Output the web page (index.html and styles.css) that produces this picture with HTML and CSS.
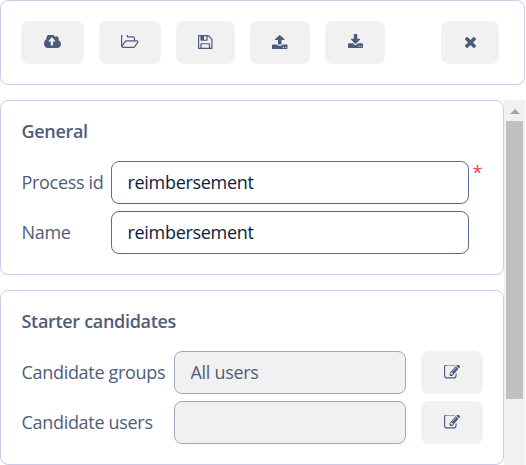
FILE: index.html
```html
<!DOCTYPE html>
<html lang="en">
<head>
<meta charset="utf-8">
<title>Process properties</title>
<link rel="stylesheet" href="styles.css">
</head>
<body>
<header class="card toolbar">
  <button class="btn btn-cloud" aria-label="Deploy"><svg class="i-cloud" preserveAspectRatio="none" viewBox="0 256 1920 1280"><path d="M1280 864q0-14-9-23l-352-352q-9-9-23-9t-23 9l-351 351q-10 12-10 24 0 14 9 23t23 9h224v352q0 13 9.5 22.5t22.5 9.5h192q13 0 22.5-9.5t9.5-22.5v-352h224q13 0 22.5-9.5t9.5-22.5zm640 288q0 159-112.5 271.5t-271.5 112.5h-1088q-185 0-316.5-131.5t-131.5-316.5q0-130 70-240t188-165q-2-30-2-43 0-212 150-362t362-150q156 0 285.5 87t188.5 231q71-62 166-62 106 0 181 75t75 181q0 76-41 138 130 31 213.5 135.5t83.5 238.5z"/></svg></button>
  <button class="btn btn-folder" aria-label="Open"><svg class="i-folder" preserveAspectRatio="none" viewBox="64 256 1909 1280"><path d="M1845 931q0-35-53-35h-1088q-40 0-85.5 21.5t-71.5 52.5l-294 363q-18 24-18 40 0 35 53 35h1088q40 0 86-22t71-53l294-363q18-22 18-39zm-1141-163h768v-160q0-40-28-68t-68-28h-576q-40 0-68-28t-28-68v-64q0-40-28-68t-68-28h-320q-40 0-68 28t-28 68v853l256-315q44-53 116-87.5t140-34.5zm1269 163q0 62-46 120l-295 363q-43 53-116 87.5t-140 34.5h-1088q-92 0-158-66t-66-158v-960q0-92 66-158t158-66h320q92 0 158 66t66 158v32h544q92 0 158 66t66 158v160h192q54 0 99 24.5t67 70.5q15 32 15 68z"/></svg></button>
  <button class="btn btn-save" aria-label="Save"><svg class="i-save" preserveAspectRatio="none" viewBox="128 128 1536 1536"><path d="M512 1536h768v-384h-768v384zm896 0h128v-896q0-14-10-38.5t-20-34.5l-281-281q-10-10-34-20t-39-10v416q0 40-28 68t-68 28h-576q-40 0-68-28t-28-68v-416h-128v1280h128v-416q0-40 28-68t68-28h832q40 0 68 28t28 68v416zm-384-928v-320q0-13-9.5-22.5t-22.5-9.5h-192q-13 0-22.5 9.5t-9.5 22.5v320q0 13 9.5 22.5t22.5 9.5h192q13 0 22.5-9.5t9.5-22.5zm640 32v928q0 40-28 68t-68 28h-1344q-40 0-68-28t-28-68v-1344q0-40 28-68t68-28h928q40 0 88 20t76 48l280 280q28 28 48 76t20 88z"/></svg></button>
  <button class="btn btn-load" aria-label="Upload"><svg class="i-upload" preserveAspectRatio="none" viewBox="64 64 1664 1600"><path d="M1344 1472q0-26-19-45t-45-19-45 19-19 45 19 45 45 19 45-19 19-45zm256 0q0-26-19-45t-45-19-45 19-19 45 19 45 45 19 45-19 19-45zm128-224v320q0 40-28 68t-68 28h-1472q-40 0-68-28t-28-68v-320q0-40 28-68t68-28h427q21 56 70.5 92t110.5 36h256q61 0 110.5-36t70.5-92h427q40 0 68 28t28 68zm-325-648q-17 40-59 40h-256v448q0 26-19 45t-45 19h-256q-26 0-45-19t-19-45v-448h-256q-42 0-59-40-17-39 14-69l448-448q18-19 45-19t45 19l448 448q31 30 14 69z"/></svg></button>
  <button class="btn btn-load" aria-label="Download"><svg class="i-download" preserveAspectRatio="none" viewBox="64 0 1664 1536"><path d="M1344 1344q0-26-19-45t-45-19-45 19-19 45 19 45 45 19 45-19 19-45zm256 0q0-26-19-45t-45-19-45 19-19 45 19 45 45 19 45-19 19-45zm128-224v320q0 40-28 68t-68 28h-1472q-40 0-68-28t-28-68v-320q0-40 28-68t68-28h465l135 136q58 56 136 56t136-56l136-136h464q40 0 68 28t28 68zm-325-569q17 41-14 70l-448 448q-18 19-45 19t-45-19l-448-448q-31-29-14-70 17-39 59-39h256v-448q0-26 19-45t45-19h256q26 0 45 19t19 45v448h256q42 0 59 39z"/></svg></button>
  <button class="btn btn-close" aria-label="Close"><svg class="i-close" preserveAspectRatio="none" viewBox="302 366 1188 1188"><path d="M1490 1322q0 40-28 68l-136 136q-28 28-68 28t-68-28l-294-294-294 294q-28 28-68 28t-68-28l-136-136q-28-28-28-68t28-68l294-294-294-294q-28-28-28-68t28-68l136-136q28-28 68-28t68 28l294 294 294-294q28-28 68-28t68 28l136 136q28 28 28 68t-28 68l-294 294 294 294q28 28 28 68z"/></svg></button>
</header>
<main class="panel">
  <div class="sections">
    <section class="card section">
      <h2>General</h2>
      <div class="row"><label class="label-general" for="pid">Process id</label><input id="pid" class="field field-general" value="reimbersement"><span class="required">*</span></div>
      <div class="row"><label class="label-general" for="name">Name</label><input id="name" class="field field-general" value="reimbersement"></div>
    </section>
    <section class="card section">
      <h2>Starter candidates</h2>
      <div class="row"><label class="label-starter" for="groups">Candidate groups</label><input id="groups" class="field field-starter" value="All users" disabled><button class="btn btn-edit" aria-label="Edit groups"><svg class="i-edit" preserveAspectRatio="none" viewBox="0 212 1784 1324"><path d="M888 1184l116-116-152-152-116 116v56h96v96h56zm440-720q-16-16-33 1l-350 350q-17 17-1 33t33-1l350-350q17-17 1-33zm80 594v190q0 119-84.5 203.5t-203.5 84.5h-832q-119 0-203.5-84.5t-84.5-203.5v-832q0-119 84.5-203.5t203.5-84.5h832q63 0 117 25 15 7 18 23 3 17-9 29l-49 49q-14 14-32 8-23-6-45-6h-832q-66 0-113 47t-47 113v832q0 66 47 113t113 47h832q66 0 113-47t47-113v-126q0-13 9-22l64-64q15-15 35-7t20 29zm-96-738l288 288-672 672h-288v-288zm444 132l-92 92-288-288 92-92q28-28 68-28t68 28l152 152q28 28 28 68t-28 68z"/></svg></button></div>
      <div class="row"><label class="label-starter" for="users">Candidate users</label><input id="users" class="field field-starter" disabled><button class="btn btn-edit" aria-label="Edit users"><svg class="i-edit" preserveAspectRatio="none" viewBox="0 212 1784 1324"><path d="M888 1184l116-116-152-152-116 116v56h96v96h56zm440-720q-16-16-33 1l-350 350q-17 17-1 33t33-1l350-350q17-17 1-33zm80 594v190q0 119-84.5 203.5t-203.5 84.5h-832q-119 0-203.5-84.5t-84.5-203.5v-832q0-119 84.5-203.5t203.5-84.5h832q63 0 117 25 15 7 18 23 3 17-9 29l-49 49q-14 14-32 8-23-6-45-6h-832q-66 0-113 47t-47 113v832q0 66 47 113t113 47h832q66 0 113-47t47-113v-126q0-13 9-22l64-64q15-15 35-7t20 29zm-96-738l288 288-672 672h-288v-288zm444 132l-92 92-288-288 92-92q28-28 68-28t68 28l152 152q28 28 28 68t-28 68z"/></svg></button></div>
    </section>
  </div>
  <div class="scrollbar"><span class="arrow"></span><span class="thumb"></span></div>
</main>
</body>
</html>
```
FILE: styles.css
```css
* { box-sizing: border-box; }
body {
  margin: 0;
  width: 525px;
  height: 465px;
  overflow: hidden;
  background: #fff;
  color: #4f5d7a;
  font: 18px/25px "Open Sans", sans-serif;
  letter-spacing: -0.31px;
}
.card {
  border: 1px solid #d0c9ea;
  border-radius: 8px;
  background: #fff;
}
.toolbar {
  display: flex;
  gap: 15px;
  height: 85px;
  padding: 20px 25px 20px 20px;
}
.btn {
  display: flex;
  flex: none;
  align-items: flex-start;
  justify-content: flex-start;
  height: 43px;
  padding: 0;
  border: 0;
  border-radius: 8px;
  background: #f1f1f1;
  color: #4c5c7c;
}
.btn svg { display: block; fill: currentColor; }
.btn-cloud { width: 63px; }
.btn-folder { width: 62px; }
.btn-save { width: 59px; }
.btn-load { width: 60px; }
.btn-close { width: 58px; margin-left: auto; }
.btn-edit { width: 62px; margin-left: 15px; }
.i-cloud { width: 17px; height: 13px; margin: 14px 0 0 23px; }
.i-folder { width: 17.5px; height: 13px; margin: 14px 0 0 22px; }
.i-save { width: 14.5px; height: 14px; margin: 14px 0 0 22px; }
.i-upload { width: 15.5px; height: 14px; margin: 14px 0 0 22.3px; }
.i-download { width: 15px; height: 14px; margin: 13px 0 0 23px; }
.i-close { width: 11px; height: 11px; margin: 16px 0 0 24px; }
.i-edit { width: 16px; height: 13.5px; margin: 14px 0 0 23px; }
.panel {
  display: flex;
  height: 365px;
  margin-top: 15px;
}
.sections {
  display: flex;
  flex-direction: column;
  gap: 15px;
  width: 504px;
}
.section { height: 175px; padding: 18px 20px 0 20.5px; }
h2 {
  margin: 0 0 17px;
  font-size: 18px;
  font-weight: 600;
  line-height: 25px;
}
.row {
  display: flex;
  align-items: center;
  height: 43px;
  margin-bottom: 7px;
}
.label-general { width: 89.5px; }
.label-starter { width: 152.5px; }
.field {
  height: 43px;
  padding: 0 16px 2px 15.5px;
  border: 1px solid #5d6c90;
  border-radius: 8px;
  background: #fff;
  color: #0c1c3c;
  font: inherit;
  letter-spacing: inherit;
}
.field:disabled {
  border-color: #9ba9c6;
  background: #f1f1f1;
  color: #4f5d7a;
}
.field-general { width: 358px; }
.field-starter { width: 232px; }
.required {
  align-self: flex-start;
  margin: -1px 0 0 3.5px;
  color: #f0404c;
  line-height: 25px;
}
.scrollbar {
  display: flex;
  flex-direction: column;
  align-items: center;
  width: 21px;
  background: #f1f1f1;
}
.arrow {
  height: 5px;
  margin: 9px 0 7px;
  border: solid transparent;
  border-width: 0 5px 5px;
  border-bottom-color: #a3a3a3;
}
.thumb { width: 17px; height: 278px; background: #c1c1c1; }
```
